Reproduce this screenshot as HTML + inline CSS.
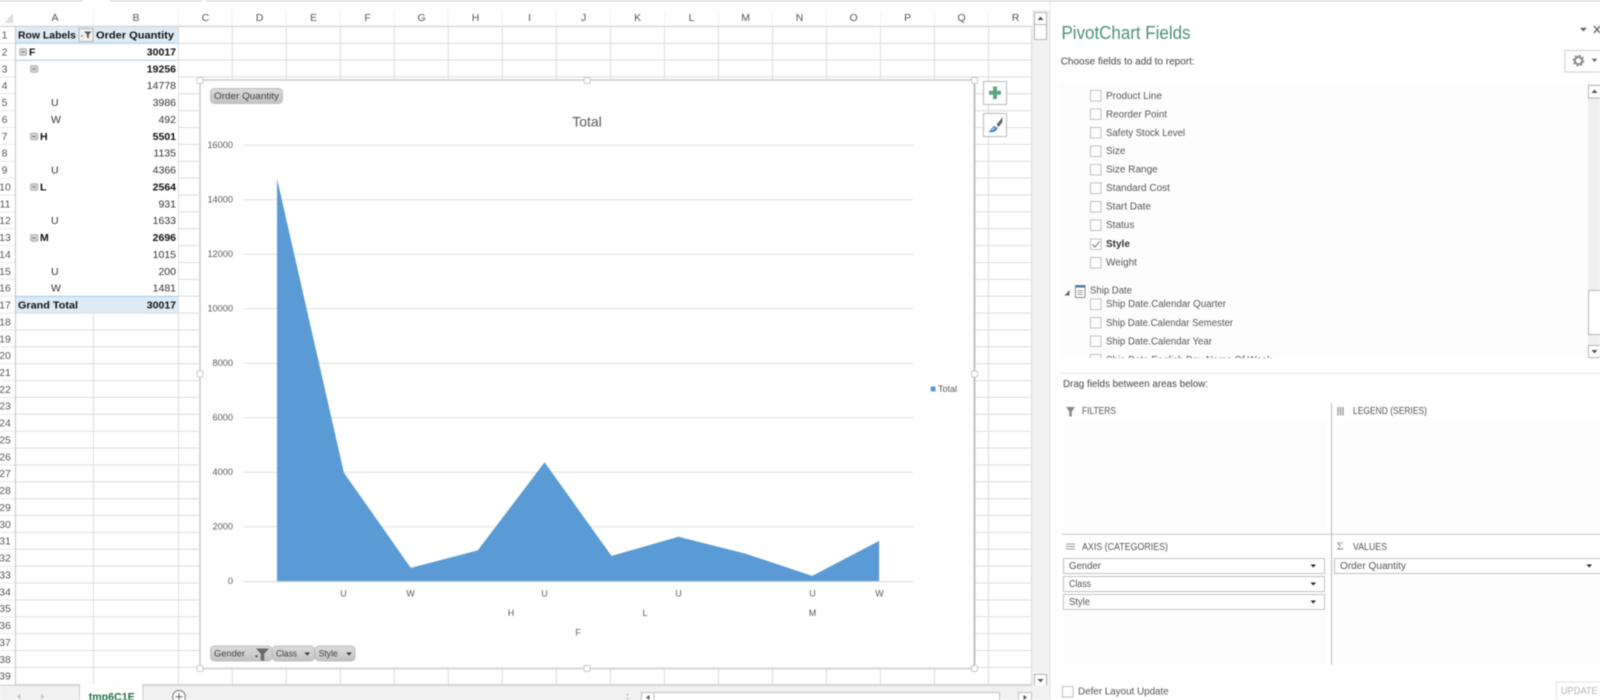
<!DOCTYPE html>
<html><head><meta charset="utf-8"><title>PivotChart</title>
<style>
html,body{margin:0;padding:0;background:#fff;width:1600px;height:700px;overflow:hidden}
svg{display:block;filter:blur(.4px)}
text{font-family:"Liberation Sans",sans-serif;dominant-baseline:central;fill:#444;font-size:10px}
.h{font-size:10.5px;fill:#555;text-anchor:middle}
.c{font-size:10.5px;fill:#333}
.b{font-size:10.5px;fill:#111;font-weight:bold}
.r{text-anchor:end}
.a{font-size:9px;fill:#595959;text-anchor:middle}
.y{font-size:9.2px;fill:#595959;text-anchor:end}
.s{font-size:9.5px;fill:#404040}
.f{font-size:10px;fill:#555}
.l{font-size:10px;fill:#555}
</style></head><body>
<svg width="1600" height="700" viewBox="0 0 1600 700" xmlns="http://www.w3.org/2000/svg">
<rect width="1600" height="700" fill="#fff"/>
<path d="M0 1H83M110 1H202M206 1H1600" stroke="#d2d2d2" stroke-width="1.2"/>
<path d="M4 23L13 13V23Z" fill="#e0e0e0"/>
<path d="M93.5 10V26M178.5 10V26M232.3 10V26M286.3 10V26M340.3 10V26M394.3 10V26M448.3 10V26M502.3 10V26M556.3 10V26M610.5 10V26M664.5 10V26M718.5 10V26M772.5 10V26M826.5 10V26M880.5 10V26M934.5 10V26M988.5 10V26" stroke="#f1f1f1"/>
<path d="M0 26.4H1032" stroke="#c8c8c8"/>
<path d="M15.5 26V685" stroke="#c6c6c6"/>
<rect x="16" y="27" width="162" height="16" fill="#ddebf7"/>
<rect x="16" y="296.5" width="162" height="16.6" fill="#ddebf7"/>
<path d="M178.5 26V685M232.3 26V685M286.3 26V685M340.3 26V685M394.3 26V685M448.3 26V685M502.3 26V685M556.3 26V685M610.5 26V685M664.5 26V685M718.5 26V685M772.5 26V685M826.5 26V685M880.5 26V685M934.5 26V685M988.5 26V685M1031.5 26V685M93.5 313V685" stroke="#dbdbdb"/>
<path d="M178 43.2H1032M178 60H1032M178 76.9H1032M178 93.8H1032M178 110.7H1032M178 127.5H1032M178 144.4H1032M178 161.3H1032M178 178.1H1032M178 195H1032M178 211.9H1032M178 228.7H1032M178 245.6H1032M178 262.5H1032M178 279.4H1032M178 296.2H1032M16 313.1H1032M16 330H1032M16 346.8H1032M16 363.7H1032M16 380.6H1032M16 397.4H1032M16 414.3H1032M16 431.2H1032M16 448.1H1032M16 464.9H1032M16 481.8H1032M16 498.7H1032M16 515.5H1032M16 532.4H1032M16 549.3H1032M16 566.1H1032M16 583H1032M16 599.9H1032M16 616.8H1032M16 633.6H1032M16 650.5H1032M16 667.4H1032M16 684.4H1032" stroke="#dbdbdb"/>
<path d="M0 43.2H15M0 60H15M0 76.9H15M0 93.8H15M0 110.7H15M0 127.5H15M0 144.4H15M0 161.3H15M0 178.1H15M0 195H15M0 211.9H15M0 228.7H15M0 245.6H15M0 262.5H15M0 279.4H15M0 296.2H15M0 313.1H15M0 330H15M0 346.8H15M0 363.7H15M0 380.6H15M0 397.4H15M0 414.3H15M0 431.2H15M0 448.1H15M0 464.9H15M0 481.8H15M0 498.7H15M0 515.5H15M0 532.4H15M0 549.3H15M0 566.1H15M0 583H15M0 599.9H15M0 616.8H15M0 633.6H15M0 650.5H15M0 667.4H15" stroke="#e8e8e8"/>
<path d="M16 43.2H178M16 60.2H178M16 296.4H178" stroke="#a6c9e8"/>
<g>
<text class="h" x="55" y="18">A</text><text class="h" x="136" y="18">B</text><text class="h" x="205.6" y="18">C</text><text class="h" x="259.6" y="18">D</text><text class="h" x="313.6" y="18">E</text><text class="h" x="367.6" y="18">F</text><text class="h" x="421.6" y="18">G</text><text class="h" x="475.6" y="18">H</text><text class="h" x="529.6" y="18">I</text><text class="h" x="583.6" y="18">J</text><text class="h" x="637.6" y="18">K</text><text class="h" x="691.6" y="18">L</text><text class="h" x="745.6" y="18">M</text><text class="h" x="799.6" y="18">N</text><text class="h" x="853.6" y="18">O</text><text class="h" x="907.6" y="18">P</text><text class="h" x="961.6" y="18">Q</text><text class="h" x="1015.6" y="18">R</text>
</g>
<g>
<text class="h" x="4.5" y="35.6">1</text><text class="h" x="4.5" y="52.5">2</text><text class="h" x="4.5" y="69.3">3</text><text class="h" x="4.5" y="86.2">4</text><text class="h" x="4.5" y="103.1">5</text><text class="h" x="4.5" y="120">6</text><text class="h" x="4.5" y="136.8">7</text><text class="h" x="4.5" y="153.7">8</text><text class="h" x="4.5" y="170.6">9</text><text class="h" x="5" y="187.4">10</text><text class="h" x="5" y="204.3">11</text><text class="h" x="5" y="221.2">12</text><text class="h" x="5" y="238">13</text><text class="h" x="5" y="254.9">14</text><text class="h" x="5" y="271.8">15</text><text class="h" x="5" y="288.7">16</text><text class="h" x="5" y="305.5">17</text><text class="h" x="5" y="322.4">18</text><text class="h" x="5" y="339.3">19</text><text class="h" x="5" y="356.1">20</text><text class="h" x="5" y="373">21</text><text class="h" x="5" y="389.9">22</text><text class="h" x="5" y="406.7">23</text><text class="h" x="5" y="423.6">24</text><text class="h" x="5" y="440.5">25</text><text class="h" x="5" y="457.4">26</text><text class="h" x="5" y="474.2">27</text><text class="h" x="5" y="491.1">28</text><text class="h" x="5" y="508">29</text><text class="h" x="5" y="524.8">30</text><text class="h" x="5" y="541.7">31</text><text class="h" x="5" y="558.6">32</text><text class="h" x="5" y="575.4">33</text><text class="h" x="5" y="592.3">34</text><text class="h" x="5" y="609.2">35</text><text class="h" x="5" y="626.1">36</text><text class="h" x="5" y="642.9">37</text><text class="h" x="5" y="659.8">38</text><text class="h" x="5" y="676.7">39</text>
</g>
<text class="b" x="18" y="35.6" textLength="58" lengthAdjust="spacingAndGlyphs">Row Labels</text>
<rect x="79" y="28.5" width="14" height="13" fill="#f2f2f2" stroke="#b4b4b4"/>
<path d="M84 31.5H91.5L88.8 34.5V38.5L87 37.5V34.5ZM80.8 35.5H83.2L82 37Z" fill="#555"/>
<text class="b" x="96" y="35.6" textLength="78" lengthAdjust="spacingAndGlyphs">Order Quantity</text>
<text class="b" x="29" y="52.5">F</text>
<text class="b" x="40" y="136.8">H</text>
<text class="b" x="40" y="187.4">L</text>
<text class="b" x="40" y="238">M</text>
<text class="c" x="51" y="103.1">U</text><text class="c" x="51" y="120">W</text><text class="c" x="51" y="170.6">U</text><text class="c" x="51" y="221.2">U</text><text class="c" x="51" y="271.8">U</text><text class="c" x="51" y="288.7">W</text>
<text class="b" x="18" y="305.5" textLength="60" lengthAdjust="spacingAndGlyphs">Grand Total</text>
<g>
<text class="b r" x="176" y="52.5">30017</text><text class="b r" x="176" y="69.3">19256</text><text class="c r" x="176" y="86.2">14778</text><text class="c r" x="176" y="103.1">3986</text><text class="c r" x="176" y="120">492</text><text class="b r" x="176" y="136.8">5501</text><text class="c r" x="176" y="153.7">1135</text><text class="c r" x="176" y="170.6">4366</text><text class="b r" x="176" y="187.4">2564</text><text class="c r" x="176" y="204.3">931</text><text class="c r" x="176" y="221.2">1633</text><text class="b r" x="176" y="238">2696</text><text class="c r" x="176" y="254.9">1015</text><text class="c r" x="176" y="271.8">200</text><text class="c r" x="176" y="288.7">1481</text><text class="b r" x="176" y="305.5">30017</text>
</g>
<g fill="#d4d4d4" stroke="#a9a9a9" stroke-width=".8">
<rect x="19.7" y="48.7" width="7" height="6.6" rx="1.5"/><rect x="30.5" y="65.7" width="7.3" height="6.6" rx="1.5"/><rect x="30.5" y="133.2" width="7.3" height="6.6" rx="1.5"/><rect x="30.5" y="183.7" width="7.3" height="6.6" rx="1.5"/><rect x="30.5" y="234.7" width="7.3" height="6.6" rx="1.5"/>
</g>
<path d="M21.5 52H25M32 69H36M32 136.5H36M32 187H36M32 238H36" stroke="#555" stroke-width=".8"/>
<rect x="200" y="80" width="774.5" height="588.5" fill="#fff" stroke="#d6d6d6" stroke-width="2"/>
<path d="M974.5 80V668.5" stroke="#bcbcbc" stroke-width="1.6"/>
<g fill="#fff" stroke="#c8c8c8" stroke-width="1">
<rect x="197" y="77.5" width="6" height="6" rx="1.5"/><rect x="584" y="77.5" width="6" height="6" rx="1.5"/><rect x="971.5" y="77.5" width="6" height="6" rx="1.5"/><rect x="197" y="371" width="6" height="6" rx="1.5"/><rect x="971.5" y="371" width="6" height="6" rx="1.5"/><rect x="197" y="665.5" width="6" height="6" rx="1.5"/><rect x="584" y="665.5" width="6" height="6" rx="1.5"/><rect x="971.5" y="665.5" width="6" height="6" rx="1.5"/>
</g>
<path d="M243.3 145.3H913M243.3 199.8H913M243.3 254.3H913M243.3 308.8H913M243.3 363.3H913M243.3 417.8H913M243.3 472.3H913M243.3 526.8H913" stroke="#dedede"/>
<path d="M277 581.3V178.6L343.9 472.7L410.8 567.9L477.7 550.4L544.6 462.3L611.5 555.9L678.4 536.8L745.3 553.6L812.2 575.9L879.1 540.9V581.3Z" fill="#5b9bd5"/>
<path d="M243.3 581.6H913" stroke="#d4d4d4"/>
<text x="587" y="121.5" text-anchor="middle" style="font-size:14px;fill:#595959">Total</text>
<text class="y" x="233" y="145">16000</text><text class="y" x="233" y="199.5">14000</text><text class="y" x="233" y="254">12000</text><text class="y" x="233" y="308.5">10000</text><text class="y" x="233" y="363">8000</text><text class="y" x="233" y="417.5">6000</text><text class="y" x="233" y="472">4000</text><text class="y" x="233" y="526.5">2000</text><text class="y" x="233" y="581">0</text>
<text class="a" x="343.5" y="593.5">U</text><text class="a" x="410.5" y="593.5">W</text><text class="a" x="544.5" y="593.5">U</text><text class="a" x="678.5" y="593.5">U</text><text class="a" x="812.5" y="593.5">U</text><text class="a" x="879.5" y="593.5">W</text>
<text class="a" x="511" y="613">H</text><text class="a" x="645" y="613">L</text><text class="a" x="812.5" y="613">M</text><text class="a" x="578" y="632.5">F</text>
<rect x="930.6" y="386.5" width="5" height="5" fill="#5b9bd5"/>
<text class="a" x="938" y="389" style="text-anchor:start">Total</text>
<defs><linearGradient id="g" x1="0" y1="0" x2="0" y2="1"><stop offset="0" stop-color="#dcdcdc"/><stop offset="1" stop-color="#c2c2c2"/></linearGradient></defs>
<g fill="url(#g)" stroke="#bdbdbd">
<rect x="210.5" y="88.5" width="72" height="15" rx="4"/><rect x="210.5" y="646" width="61.5" height="15" rx="4"/><rect x="272.5" y="646" width="42" height="15" rx="4"/><rect x="315" y="646" width="40" height="15" rx="4"/>
</g>
<text class="s" x="214" y="96.3" textLength="65" lengthAdjust="spacingAndGlyphs">Order Quantity</text>
<text class="s" x="214" y="654" textLength="31" lengthAdjust="spacingAndGlyphs">Gender</text>
<text class="s" x="276" y="654" textLength="21" lengthAdjust="spacingAndGlyphs">Class</text>
<text class="s" x="318.6" y="654" textLength="19" lengthAdjust="spacingAndGlyphs">Style</text>
<path d="M256 648.5H269L264.2 654V660.5H260.8V654Z" fill="#6a6a6a"/>
<path d="M255 655.5H258L256.5 657.5ZM304.5 652.5H310L307.2 655.5ZM346.3 652.5H351.8L349 655.5Z" fill="#333"/>
<rect x="983.5" y="81.5" width="23" height="23" fill="#fff" stroke="#b8b8b8"/>
<path d="M993 86.5H997V90.7H1001V94.7H997V99H993V94.7H989V90.7H993Z" fill="#5fa585"/>
<rect x="983.5" y="113.5" width="23" height="23" fill="#fff" stroke="#b8b8b8"/>
<path d="M996.5 124.5L1002.7 117L1002.2 122.5L998.5 127Z" fill="#666"/>
<path d="M988 132C990.5 131.5 991 128 994 126L997.5 127.5C997.5 130.5 994.5 132.2 991.5 132.2Z" fill="#4b86c7"/>
<path d="M992 129.5L994.5 128" stroke="#fff" stroke-width=".8"/>
<rect x="1032" y="10" width="17.5" height="675" fill="#f1f1f1"/>
<rect x="1034.5" y="12.5" width="12" height="12" fill="#fff" stroke="#b4b4b4"/>
<path d="M1040.5 16.5L1043.5 20H1037.5Z" fill="#555"/>
<rect x="1034.5" y="24.5" width="12" height="15" fill="#fff" stroke="#b4b4b4"/>
<rect x="1034.5" y="674.5" width="12" height="12" fill="#fff" stroke="#b4b4b4"/>
<path d="M1037.5 679H1043.5L1040.5 682.5Z" fill="#555"/>
<rect x="0" y="685.5" width="1050" height="14.5" fill="#f1f1f1"/>
<path d="M0 685.2H1032" stroke="#c8c8c8"/>
<rect x="79.5" y="685" width="63.5" height="16" fill="#fff" stroke="#cbcbcb"/>
<rect x="80" y="684" width="62.5" height="2" fill="#fff"/>
<text x="88.7" y="697.3" textLength="46" lengthAdjust="spacingAndGlyphs" style="font-size:11px;font-weight:bold;fill:#217346">tmp6C1E</text>
<path d="M20.5 693.5L17 696.5L20.5 699.5ZM41 693.5L44.5 696.5L41 699.5Z" fill="#c8c8c8"/>
<circle cx="179" cy="696.7" r="6.3" fill="#fbfbfb" stroke="#777" stroke-width="1"/>
<path d="M175.5 696.7H182.5M179 693.2V700.2" stroke="#666"/>
<path d="M627.5 694v1.5M627.5 698v1.5" stroke="#888"/>
<rect x="641.5" y="692.5" width="358" height="9" fill="#fff" stroke="#c0c0c0"/>
<path d="M654 692V700" stroke="#c0c0c0"/>
<path d="M649.5 695L646 697.5L649.5 700Z" fill="#555"/>
<rect x="1018.5" y="692.5" width="13" height="9" fill="#fff" stroke="#c0c0c0"/>
<path d="M1023.5 695L1027 697.5L1023.5 700Z" fill="#555"/>
<rect x="1050" y="2" width="550" height="698" fill="#fff"/>
<path d="M1050 2V700" stroke="#e6e6e6"/>
<text x="1061.5" y="33" textLength="129" lengthAdjust="spacingAndGlyphs" style="font-size:18px;fill:#4a917a">PivotChart Fields</text>
<path d="M1580 27.8H1587L1583.5 31.5Z" fill="#666"/>
<path d="M1594 26L1600 33M1600 26L1594 33" stroke="#777" stroke-width="1.6"/>
<text x="1060.7" y="62" textLength="134" lengthAdjust="spacingAndGlyphs" style="font-size:10px;fill:#444">Choose fields to add to report:</text>
<rect x="1565" y="50.5" width="36" height="21.5" fill="#fff" stroke="#d8d8d8" stroke-width="1.3"/>
<circle cx="1578.5" cy="60.6" r="3.6" fill="none" stroke="#8a8a8a" stroke-width="2"/>
<circle cx="1578.5" cy="60.6" r="5.2" fill="none" stroke="#8a8a8a" stroke-width="1.4" stroke-dasharray="2 2.08"/>
<path d="M1591.5 58.8H1597.5L1594.5 62Z" fill="#666"/>
<rect x="1060" y="83" width="528" height="275" fill="#fdfdfd"/>
<rect x="1588" y="84" width="12" height="274" fill="#f0f0f0"/>
<rect x="1588.5" y="85.5" width="12" height="12.5" fill="#fff" stroke="#b4b4b4"/>
<path d="M1594.5 89.5L1597.5 93H1591.5Z" fill="#555"/>
<rect x="1588.5" y="290.5" width="12" height="44" fill="#fff" stroke="#b4b4b4"/>
<rect x="1588.5" y="345.5" width="12" height="12" fill="#fff" stroke="#b4b4b4"/>
<path d="M1591.5 350H1597.5L1594.5 353.5Z" fill="#555"/>
<g fill="#fff" stroke="#c0c0c0">
<rect x="1090.5" y="90.5" width="10.5" height="10.5"/><rect x="1090.5" y="109" width="10.5" height="10.5"/><rect x="1090.5" y="127.5" width="10.5" height="10.5"/><rect x="1090.5" y="146" width="10.5" height="10.5"/><rect x="1090.5" y="164.5" width="10.5" height="10.5"/><rect x="1090.5" y="183" width="10.5" height="10.5"/><rect x="1090.5" y="201.5" width="10.5" height="10.5"/><rect x="1090.5" y="220" width="10.5" height="10.5"/><rect x="1090.5" y="239" width="10.5" height="10.5"/><rect x="1090.5" y="257.5" width="10.5" height="10.5"/><rect x="1090.5" y="299" width="10.5" height="10.5"/><rect x="1090.5" y="317.5" width="10.5" height="10.5"/><rect x="1090.5" y="336" width="10.5" height="10.5"/>
</g>
<path d="M1092.5 244.5L1095 247L1099.5 241.5" fill="none" stroke="#777"/>
<text class="f" x="1106" y="96.4" textLength="56" lengthAdjust="spacingAndGlyphs">Product Line</text>
<text class="f" x="1106" y="115" textLength="61" lengthAdjust="spacingAndGlyphs">Reorder Point</text>
<text class="f" x="1106" y="133.4" textLength="79" lengthAdjust="spacingAndGlyphs">Safety Stock Level</text>
<text class="f" x="1106" y="151.7">Size</text>
<text class="f" x="1106" y="170.1">Size Range</text>
<text class="f" x="1106" y="188.6">Standard Cost</text>
<text class="f" x="1106" y="207.1">Start Date</text>
<text class="f" x="1106" y="225.7">Status</text>
<text x="1106" y="244.7" style="font-size:10px;font-weight:bold;fill:#333">Style</text>
<text class="f" x="1106" y="263.1">Weight</text>
<path d="M1069.5 290L1069.5 295.5H1064.5Z" fill="#666"/>
<rect x="1075.5" y="285.5" width="9.5" height="12" fill="#fff" stroke="#8a8a8a"/>
<rect x="1075.5" y="285.5" width="9.5" height="2" fill="#3f74ad"/>
<path d="M1077.5 290.5H1083M1077.5 292.5H1083M1077.5 294.5H1083" stroke="#a5a5a5"/>
<text class="f" x="1090" y="291" textLength="42" lengthAdjust="spacingAndGlyphs">Ship Date</text>
<text class="f" x="1106" y="304.7" textLength="120" lengthAdjust="spacingAndGlyphs">Ship Date.Calendar Quarter</text>
<text class="f" x="1106" y="323.4" textLength="127" lengthAdjust="spacingAndGlyphs">Ship Date.Calendar Semester</text>
<text class="f" x="1106" y="342.1" textLength="106" lengthAdjust="spacingAndGlyphs">Ship Date.Calendar Year</text>
<rect x="1090.5" y="354.5" width="10.5" height="10.5" fill="#fff" stroke="#c0c0c0"/>
<text class="f" x="1106" y="360.4" textLength="166" lengthAdjust="spacingAndGlyphs">Ship Date.English Day Name Of Week</text>
<rect x="1060" y="358" width="528" height="14" fill="#fff"/>
<path d="M1061 373.3H1600" stroke="#cdcdcd" stroke-dasharray="1 1"/>
<text x="1063" y="384.4" textLength="145" lengthAdjust="spacingAndGlyphs" style="font-size:10px;fill:#444">Drag fields between areas below:</text>
<rect x="1062" y="421" width="264" height="110" fill="#fdfdfd"/>
<rect x="1335" y="421" width="265" height="110" fill="#fdfdfd"/>
<rect x="1062" y="612" width="264" height="53" fill="#fdfdfd"/>
<rect x="1335" y="576" width="265" height="89" fill="#fdfdfd"/>
<path d="M1331.5 403V665" stroke="#b8b8b8"/>
<path d="M1062 534.3H1600" stroke="#c4c4c4"/>
<path d="M1066 407H1075L1071.8 411.5V416.5H1069.2V411.5Z" fill="#888"/>
<text class="l" x="1082" y="411.4" textLength="34" lengthAdjust="spacingAndGlyphs">FILTERS</text>
<path d="M1338 407V415.5M1340.5 407V415.5M1343 407V415.5" stroke="#999" stroke-width="1.4"/>
<text class="l" x="1353" y="411.4" textLength="74" lengthAdjust="spacingAndGlyphs">LEGEND (SERIES)</text>
<path d="M1066 544H1075M1066 546.5H1075M1066 549H1075" stroke="#999" stroke-width="1.1"/>
<text class="l" x="1082" y="547.4" textLength="86" lengthAdjust="spacingAndGlyphs">AXIS (CATEGORIES)</text>
<text x="1337" y="546.5" style="font-family:'Liberation Serif',serif;font-size:11px;fill:#777">Σ</text>
<text class="l" x="1353" y="547.4" textLength="34" lengthAdjust="spacingAndGlyphs">VALUES</text>
<g fill="#fff" stroke="#c0c0c0">
<rect x="1063.5" y="558.5" width="261" height="15"/><rect x="1063.5" y="576.5" width="261" height="15"/><rect x="1063.5" y="594.5" width="261" height="15"/><rect x="1334.5" y="558.5" width="267" height="15"/>
</g>
<text class="f" x="1069" y="566.5" textLength="32" lengthAdjust="spacingAndGlyphs">Gender</text>
<text class="f" x="1069" y="584.5" textLength="22" lengthAdjust="spacingAndGlyphs">Class</text>
<text class="f" x="1069" y="602.5" textLength="21" lengthAdjust="spacingAndGlyphs">Style</text>
<text class="f" x="1340" y="566.5" textLength="66" lengthAdjust="spacingAndGlyphs">Order Quantity</text>
<path d="M1310.5 564.5H1316L1313.2 567.5ZM1310.5 582.5H1316L1313.2 585.5ZM1310.5 600.5H1316L1313.2 603.5ZM1586.5 564.5H1592L1589.2 567.5Z" fill="#222"/>
<rect x="1062.5" y="686.5" width="10.5" height="10.5" fill="#fff" stroke="#c0c0c0"/>
<text class="f" x="1078" y="692" textLength="90.7" lengthAdjust="spacingAndGlyphs">Defer Layout Update</text>
<rect x="1556.5" y="682" width="44" height="19" fill="#fff" stroke="#e2e2e2"/>
<text x="1561" y="691.3" textLength="36.7" lengthAdjust="spacingAndGlyphs" style="font-size:10px;fill:#b3b3b3">UPDATE</text>
</svg>
</body></html>
